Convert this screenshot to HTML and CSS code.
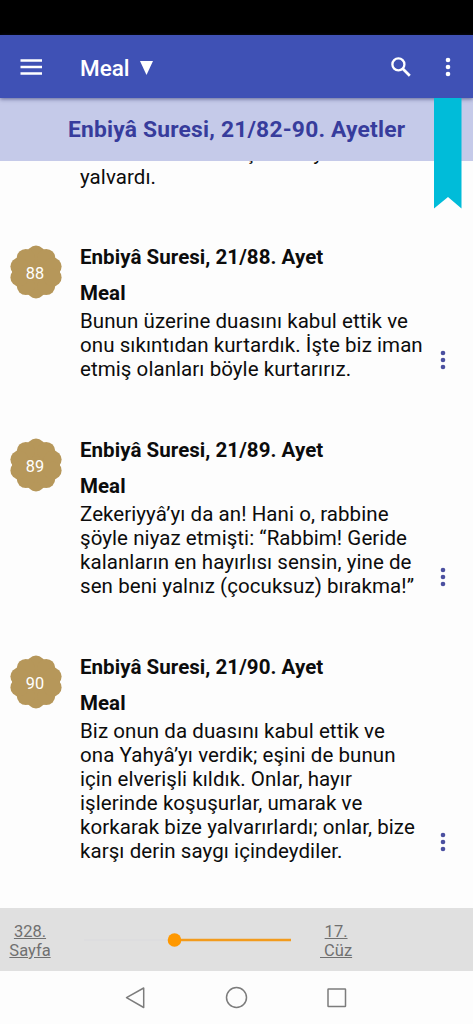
FILE: index.html
```html
<!DOCTYPE html>
<html lang="tr">
<head>
<meta charset="utf-8">
<meta name="viewport" content="width=device-width, initial-scale=1">
<title>Meal</title>
<link rel="stylesheet" href="styles.css">
</head>
<body>
<svg class="defs" width="0" height="0" aria-hidden="true">
  <symbol id="rosette" viewBox="-27 -27 54 54">
    <g fill="#b6975a"><circle r="24"/>
    <circle cx="0" cy="-17.4" r="9"/><circle cx="0" cy="17.4" r="9"/>
    <circle cx="10.2" cy="-14.1" r="9"/><circle cx="-10.2" cy="-14.1" r="9"/>
    <circle cx="10.2" cy="14.1" r="9"/><circle cx="-10.2" cy="14.1" r="9"/>
    <circle cx="16.6" cy="-5.4" r="9"/><circle cx="-16.6" cy="-5.4" r="9"/>
    <circle cx="16.6" cy="5.4" r="9"/><circle cx="-16.6" cy="5.4" r="9"/></g>
  </symbol>
  <symbol id="dots" viewBox="0 0 6 20"><circle cx="3" cy="3" r="2.3"/><circle cx="3" cy="10" r="2.3"/><circle cx="3" cy="17" r="2.3"/></symbol>
</svg>
<div class="screen">
  <div class="status"></div>
  <header class="appbar">
    <svg class="menu" width="22" height="16" viewBox="0 0 22 16"><path d="M.5 1.500h21.500M.5 8h21.500M.5 14.500h21.500" stroke="#fff" stroke-width="2.3"/></svg>
    <h1 class="apptitle">Meal <svg width="13" height="14" viewBox="0 0 13 14"><path d="M0 0h13L6.5 14z" fill="#fff"/></svg></h1>
    <svg class="search" width="20" height="20" viewBox="0 0 20 20"><circle cx="7.4" cy="7.4" r="6" fill="none" stroke="#fff" stroke-width="2.3"/><path d="M11.8 11.8l7 7" stroke="#fff" stroke-width="2.7"/></svg>
    <svg class="more" width="6" height="20"><use href="#dots"/></svg>
  </header>
  <div class="subbar"><h2>Enbiyâ Suresi, 21/82-90. Ayetler</h2>
    <svg class="ribbon" width="28" height="111" viewBox="0 0 28 111"><path d="M0 0h27.500v110.500L14 99 0 110.500z" fill="#00bcd9"/></svg>
  </div>
  <main class="list">
    <p class="text previous">ben haksızlık etmişim!” diye<br>yalvardı.</p>
    <article class="verse">
      <div class="badge"><svg width="54" height="54"><use href="#rosette"/></svg><span>88</span></div>
      <div class="body"><h3>Enbiyâ Suresi, 21/88. Ayet</h3><h4>Meal</h4>
        <p class="text">Bunun üzerine duasını kabul ettik ve<br>onu sıkıntıdan kurtardık. İşte biz iman<br>etmiş olanları böyle kurtarırız.</p></div>
      <svg class="options" width="6" height="20"><use href="#dots"/></svg>
    </article>
    <article class="verse">
      <div class="badge"><svg width="54" height="54"><use href="#rosette"/></svg><span>89</span></div>
      <div class="body"><h3>Enbiyâ Suresi, 21/89. Ayet</h3><h4>Meal</h4>
        <p class="text">Zekeriyyâ’yı da an! Hani o, rabbine<br>şöyle niyaz etmişti: “Rabbim! Geride<br>kalanların en hayırlısı sensin, yine de<br>sen beni yalnız (çocuksuz) bırakma!”</p></div>
      <svg class="options" width="6" height="20"><use href="#dots"/></svg>
    </article>
    <article class="verse">
      <div class="badge"><svg width="54" height="54"><use href="#rosette"/></svg><span>90</span></div>
      <div class="body"><h3>Enbiyâ Suresi, 21/90. Ayet</h3><h4>Meal</h4>
        <p class="text">Biz onun da duasını kabul ettik ve<br>ona Yahyâ’yı verdik; eşini de bunun<br>için elverişli kıldık. Onlar, hayır<br>işlerinde koşuşurlar, umarak ve<br>korkarak bize yalvarırlardı; onlar, bize<br>karşı derin saygı içindeydiler.</p></div>
      <svg class="options" width="6" height="20"><use href="#dots"/></svg>
    </article>
  </main>
  <div class="pager">
    <div class="page">328.<br>Sayfa</div>
    <svg class="slider" width="207" height="16" viewBox="0 0 207 16"><path d="M0 8h90" stroke="#dadade" stroke-width="1"/><path d="M90 8h117" stroke="#f29b1d" stroke-width="2.4"/><circle cx="90.500" cy="8" r="6.8" fill="#ff9800"/></svg>
    <div class="juz">17.<br>&nbsp;Cüz</div>
  </div>
  <nav class="nav">
    <svg width="224" height="24" viewBox="0 0 224 24" fill="none" stroke="#7c7c7c" stroke-width="1.5" stroke-linejoin="round"><path d="M18.700 3v19.500L1.500 12.700z"/><circle cx="111.500" cy="12.500" r="10"/><rect x="203" y="4" width="17.500" height="17.500" rx=".5"/></svg>
  </nav>
</div>
</body>
</html>
```
FILE: styles.css
```css
* { box-sizing: border-box; }
body { margin: 0; background: #fdfdfd; font-family: Roboto, "Noto Sans", sans-serif; color: #0c0c0c; }
h1, h2, h3, h4, p { margin: 0; }
.defs { position: absolute; }
.screen { display: flex; flex-direction: column; width: 473px; height: 1024px; overflow: hidden; }
.status { height: 35px; flex: none; background: #000; }
.appbar { position: relative; display: flex; align-items: center; flex: none; height: 63px; padding: 0 22px 0 20px; background: #3f51b5; z-index: 1; box-shadow: 0 1px 4px rgba(30, 35, 90, .6); }
.apptitle { margin-left: 38px; font-size: 22.5px; font-weight: 500; color: #fff; display: flex; align-items: center; gap: 10px; padding-top: 2px; }
.search { margin-left: auto; }
.more { margin-left: 34px; fill: #fff; }
.subbar { position: relative; flex: none; height: 63px; background: #c5cae9; padding-left: 68px; }
.subbar h2 { line-height: 63px; font-size: 22.8px; font-weight: 700; color: #373c9c; white-space: nowrap; letter-spacing: .2px; }
.ribbon { position: absolute; z-index: 2; right: 11px; top: 0; }
.list { flex: none; height: 747px; overflow: hidden; }
.text { font-size: 20.5px; line-height: 24px; white-space: nowrap; letter-spacing: .07px; }
.previous { margin: -20px 0 56px 80px; }
.verse { display: flex; position: relative; margin-bottom: 57px; }
.badge { flex: none; display: grid; place-items: center; width: 54px; height: 54px; margin: 0 17px 0 9px; }
.badge svg, .badge span { grid-area: 1 / 1; }
.badge span { color: #fff; font-size: 16.3px; padding: 2px 2px 0 0; }
.body { flex: 1; }
h3, h4 { font-size: 20.5px; font-weight: 700; line-height: 24px; white-space: nowrap; letter-spacing: .05px; }
h4 { margin: 12px 0 4px; }
.options { position: absolute; right: 27px; bottom: 11px; fill: #4b50a0; }
.pager { flex: none; height: 63px; display: flex; align-items: center; background: #e0e0e0; color: #707070; font-size: 16.5px; line-height: 19.500px; padding-top: 1px; text-decoration: underline; }
.page, .juz { padding-top: 2px; }
.page { width: 60px; text-align: center; }
.slider { margin-left: 24px; }
.juz { margin-left: 29px; text-align: center; }
.nav { padding: 14px 0 0 125px; }
```
